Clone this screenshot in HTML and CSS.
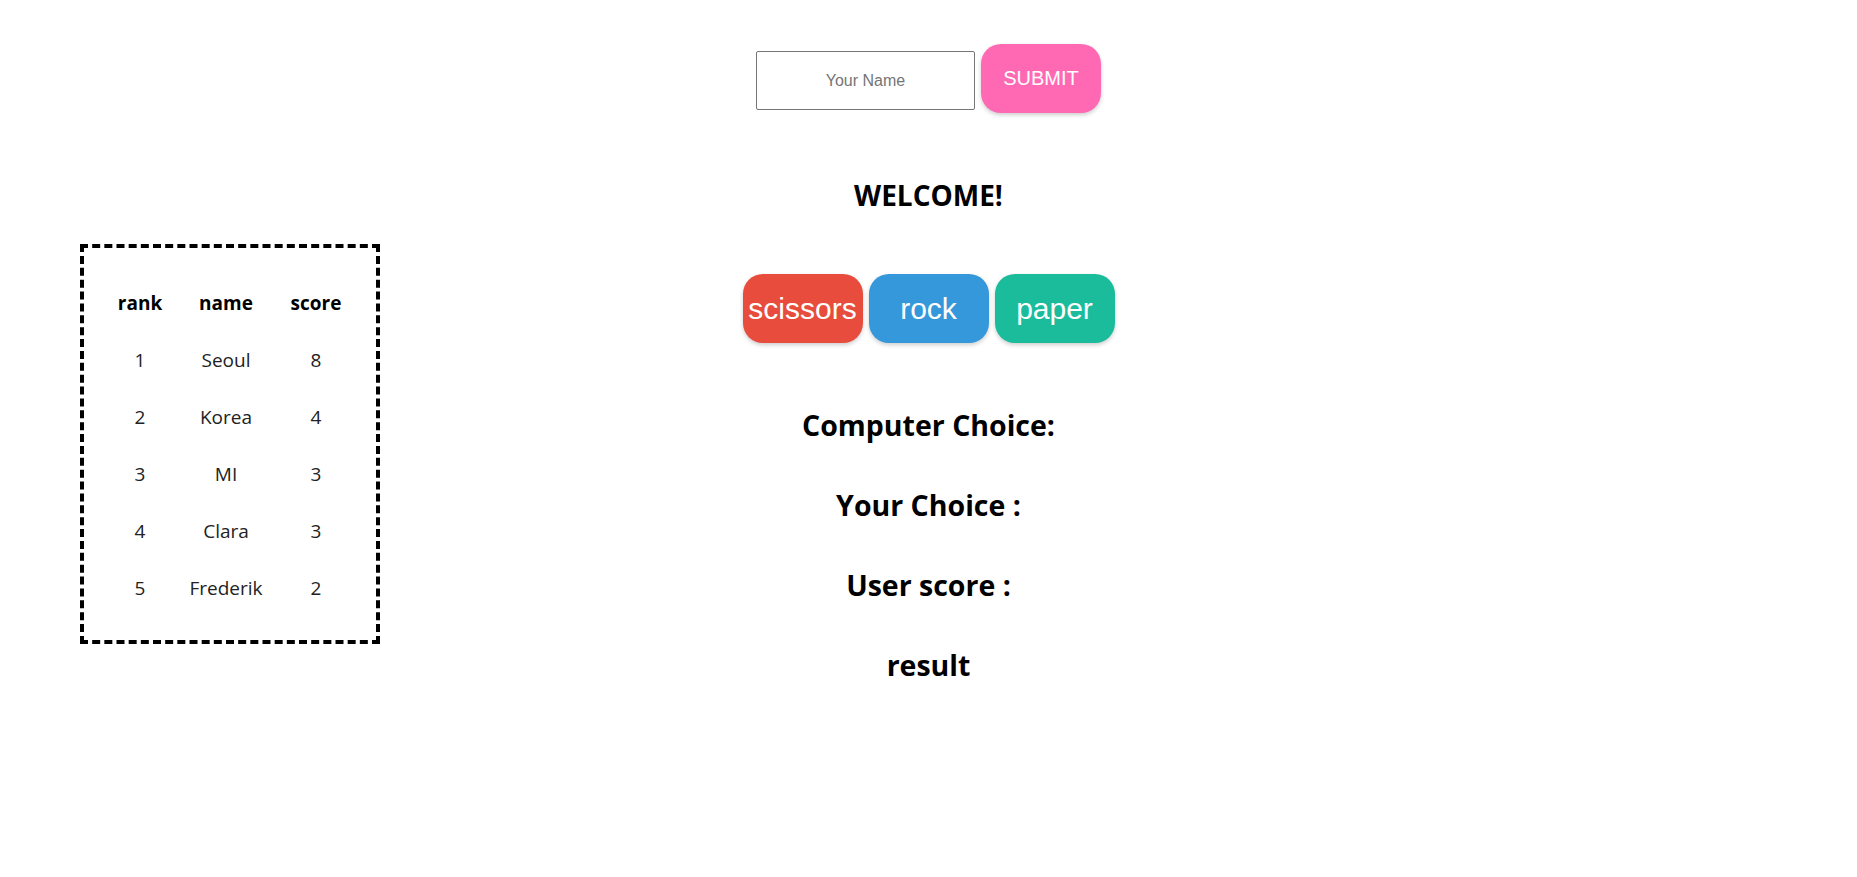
FILE: index.html
```html
<!DOCTYPE html>
<html lang="en">
<head>
<meta charset="utf-8">
<title>Rock Scissors Paper</title>
<link rel="stylesheet" href="styles.css">
</head>
<body>
<div class="page">
  <aside class="side">
    <div class="board">
      <div class="grid">
        <div class="cell head">rank</div><div class="cell head">name</div><div class="cell head">score</div>
        <div class="cell">1</div><div class="cell">Seoul</div><div class="cell">8</div>
        <div class="cell">2</div><div class="cell">Korea</div><div class="cell">4</div>
        <div class="cell">3</div><div class="cell">MI</div><div class="cell">3</div>
        <div class="cell">4</div><div class="cell">Clara</div><div class="cell">3</div>
        <div class="cell">5</div><div class="cell">Frederik</div><div class="cell">2</div>
      </div>
    </div>
  </aside>
  <main class="center">
    <form class="name-form">
      <input class="name-input" type="text" placeholder="Your Name">
      <button class="submit" type="button">SUBMIT</button>
    </form>
    <h2 class="welcome">WELCOME!</h2>
    <div class="choices">
      <button class="choice scissors" type="button">scissors</button>
      <button class="choice rock" type="button">rock</button>
      <button class="choice paper" type="button">paper</button>
    </div>
    <h2 class="info first">Computer Choice:</h2>
    <h2 class="info">Your Choice :</h2>
    <h2 class="info">User score :</h2>
    <h2 class="info">result</h2>
  </main>
  <div class="spacer"></div>
</div>
</body>
</html>
```
FILE: styles.css
```css
html, body {
  margin: 0;
  padding: 0;
  background: #ffffff;
}
body {
  font-family: "Open Sans", "Noto Sans", sans-serif;
  color: #000;
}
.page {
  display: grid;
  grid-template-columns: 1fr auto 1fr;
  min-height: 877px;
}
.side {
  display: flex;
  align-items: flex-start;
}
.board {
  margin: 244px 0 0 80px;
  width: 300px;
  height: 400px;
  box-sizing: border-box;
  border: 4px dashed #000;
  padding: 26px 20px 0 20px;
}
.grid {
  display: grid;
  grid-template-columns: 72px 100px 80px;
  grid-auto-rows: 57px;
}
.cell {
  display: flex;
  align-items: center;
  justify-content: center;
  font-size: 19px;
  color: #222;
}
.cell.head {
  font-weight: 700;
  color: #000;
}
.center {
  display: flex;
  flex-direction: column;
  align-items: center;
}
.name-form {
  display: flex;
  align-items: center;
  gap: 6px;
  margin-top: 44px;
}
.name-input {
  width: 219px;
  height: 59px;
  box-sizing: border-box;
  margin-top: 4px;
  border: 1px solid #767676;
  border-radius: 2px;
  text-align: center;
  font-family: "Liberation Sans", Arial, sans-serif;
  font-size: 16px;
  color: #000;
  padding: 0;
}
.name-input::placeholder {
  color: #757575;
}
.submit {
  width: 120px;
  height: 69px;
  border: none;
  border-radius: 20px;
  background: #ff69b4;
  color: #fff;
  font-family: "Liberation Sans", Arial, sans-serif;
  font-size: 20px;
  box-shadow: 0 2px 4px rgba(0, 0, 0, 0.2);
  padding: 0;
}
.welcome {
  margin: 0;
  margin-top: 62px;
  font-size: 28px;
  line-height: 40px;
  font-weight: 700;
}
.choices {
  display: flex;
  gap: 6px;
  margin-top: 59px;
}
.choice {
  width: 120px;
  height: 69px;
  border: none;
  border-radius: 20px;
  color: #fff;
  font-family: "Liberation Sans", Arial, sans-serif;
  font-size: 30px;
  padding: 0;
  box-shadow: 0 2px 4px rgba(0, 0, 0, 0.2);
}
.scissors { background: #e74c3c; }
.rock { background: #3498db; }
.paper { background: #1abc9c; }
.info {
  margin: 0;
  margin-top: 40px;
  font-size: 28.5px;
  line-height: 40px;
  font-weight: 700;
}
.info.first {
  margin-top: 62px;
}
```
